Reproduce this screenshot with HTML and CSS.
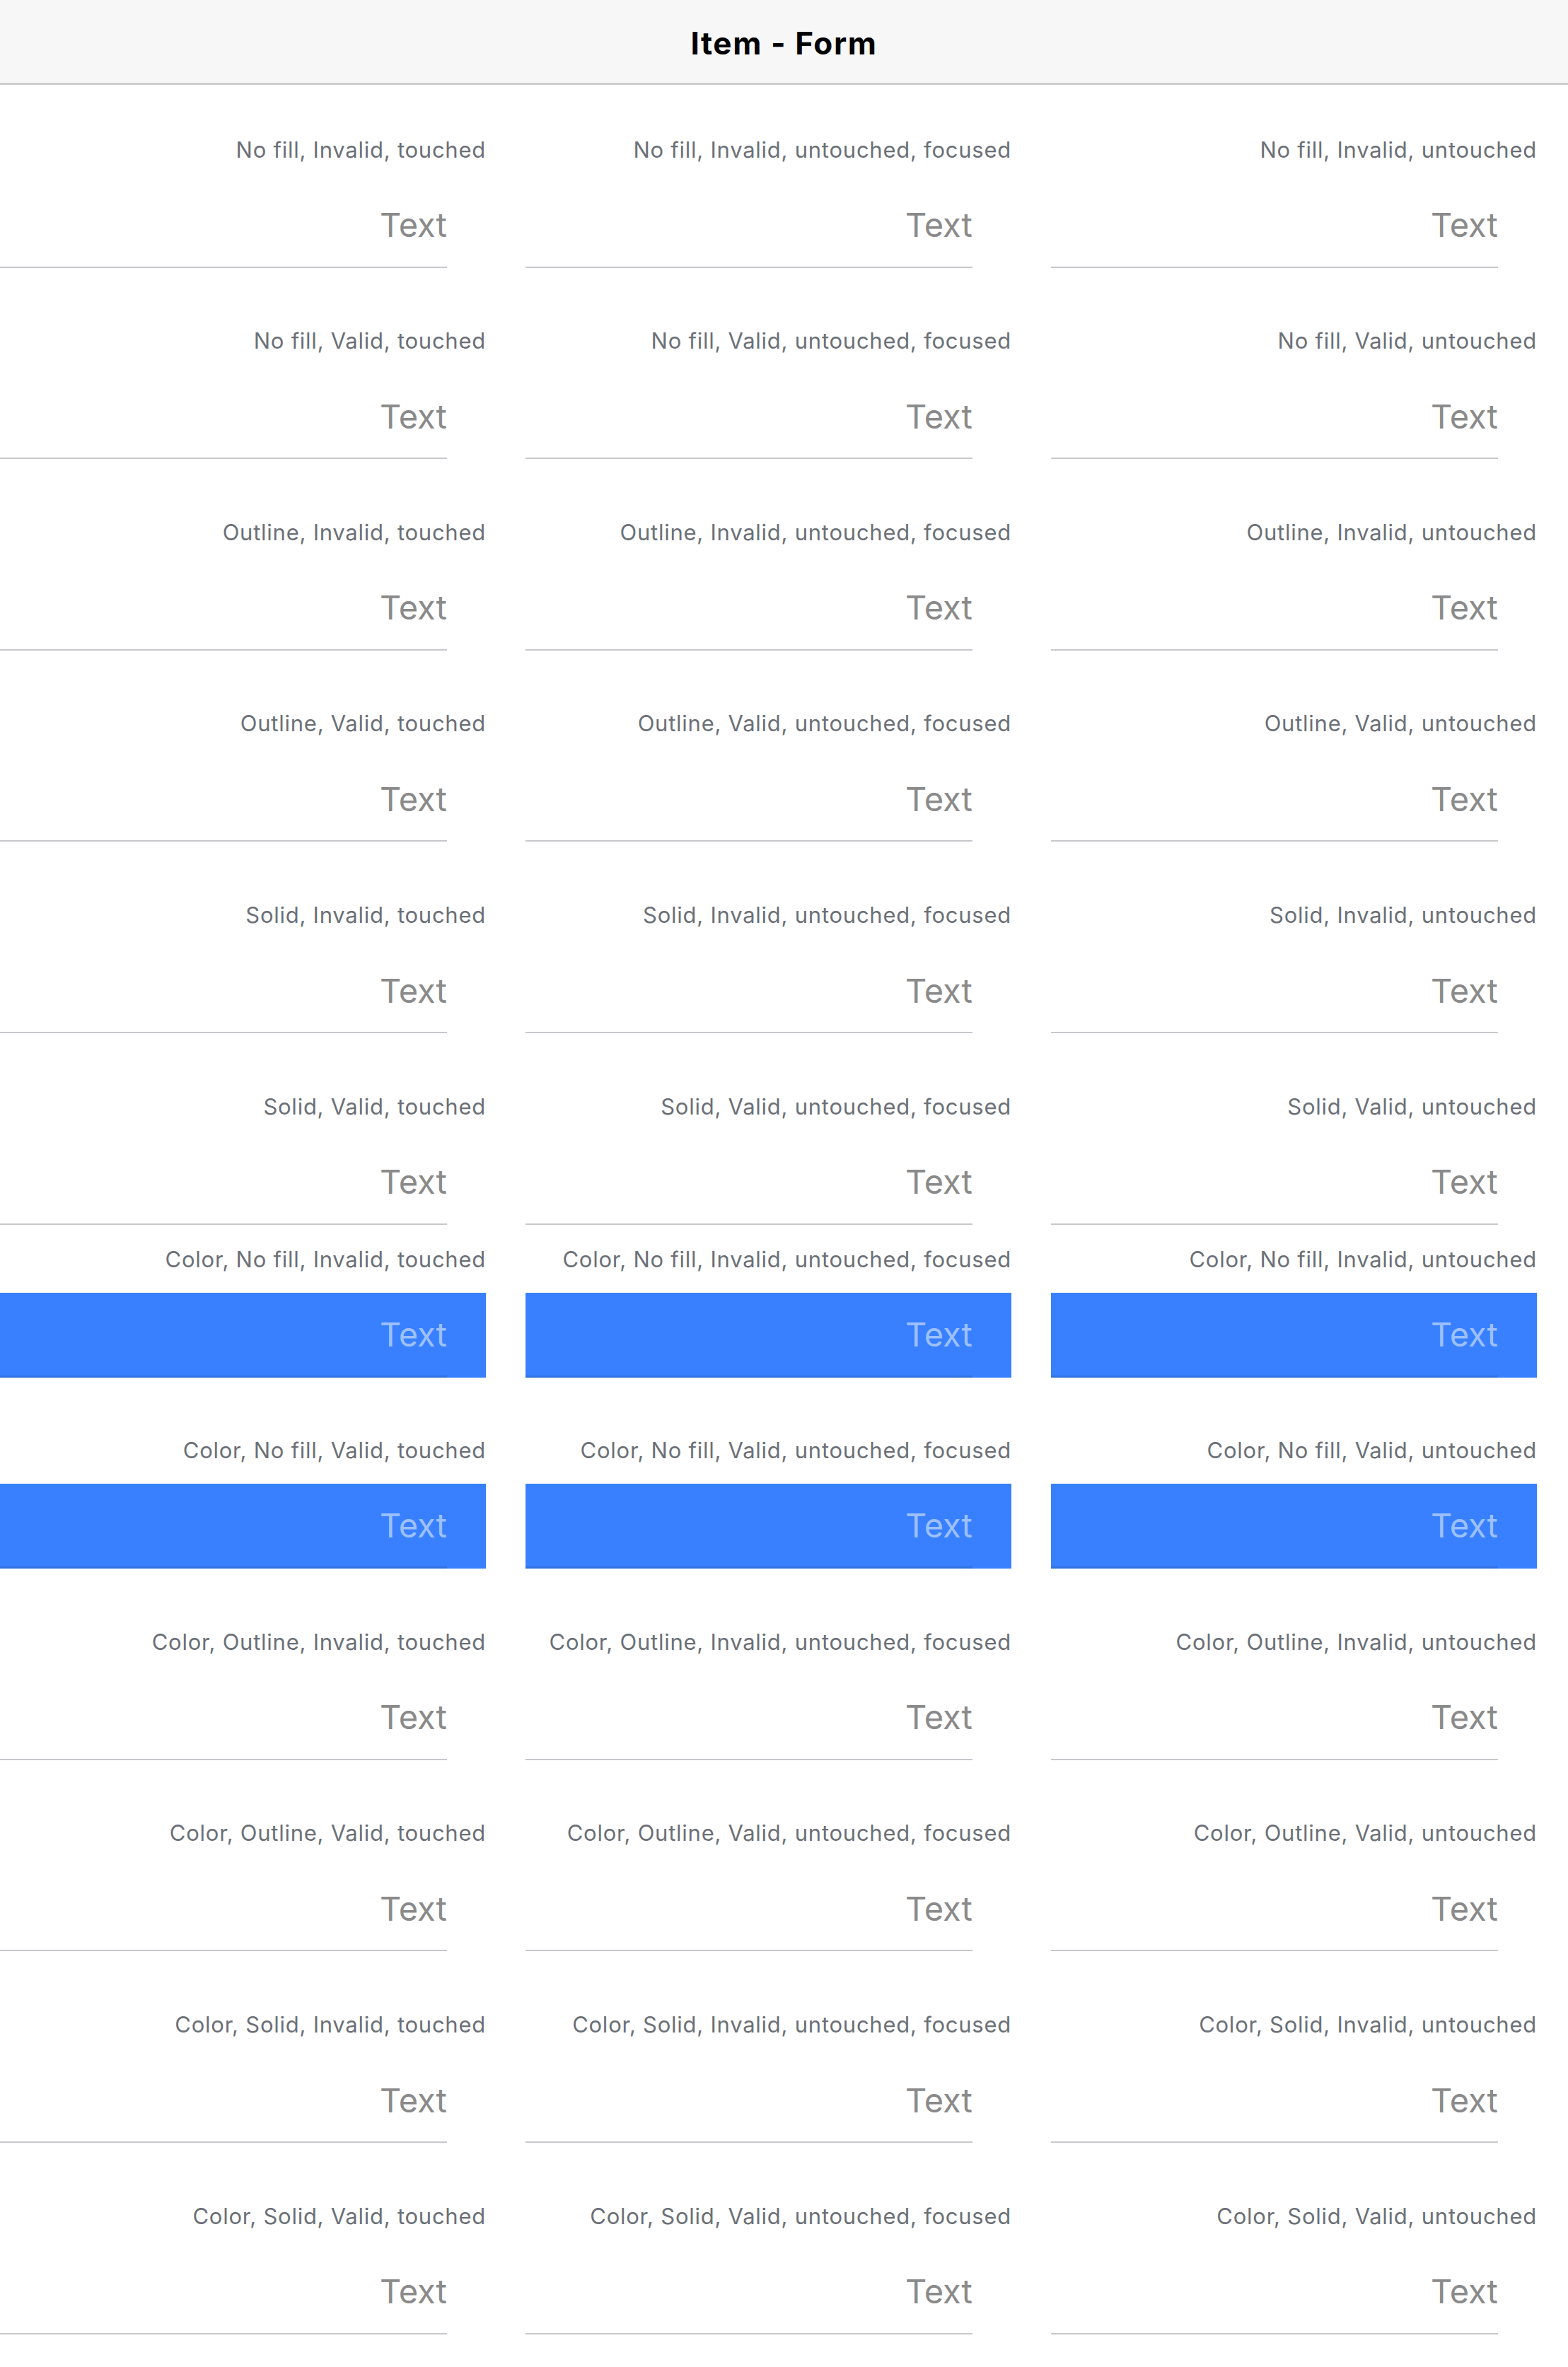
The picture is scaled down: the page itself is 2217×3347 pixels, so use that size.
FILE: index.html
```html
<!DOCTYPE html>
<html lang="en">
<head>
<meta charset="utf-8">
<title>Item - Form</title>
<link rel="stylesheet" href="styles.css">
</head>
<body>
<header class="toolbar"><h1 class="title">Item - Form</h1></header>
<main class="content">
  <section class="grid">
    <div class="item"><div class="label">No fill, Invalid, touched</div><div class="field"><div class="input">Text</div></div></div>
    <div class="item"><div class="label">No fill, Invalid, untouched, focused</div><div class="field"><div class="input">Text</div></div></div>
    <div class="item"><div class="label">No fill, Invalid, untouched</div><div class="field"><div class="input">Text</div></div></div>

    <div class="item"><div class="label">No fill, Valid, touched</div><div class="field"><div class="input">Text</div></div></div>
    <div class="item"><div class="label">No fill, Valid, untouched, focused</div><div class="field"><div class="input">Text</div></div></div>
    <div class="item"><div class="label">No fill, Valid, untouched</div><div class="field"><div class="input">Text</div></div></div>

    <div class="item"><div class="label">Outline, Invalid, touched</div><div class="field"><div class="input">Text</div></div></div>
    <div class="item"><div class="label">Outline, Invalid, untouched, focused</div><div class="field"><div class="input">Text</div></div></div>
    <div class="item"><div class="label">Outline, Invalid, untouched</div><div class="field"><div class="input">Text</div></div></div>

    <div class="item"><div class="label">Outline, Valid, touched</div><div class="field"><div class="input">Text</div></div></div>
    <div class="item"><div class="label">Outline, Valid, untouched, focused</div><div class="field"><div class="input">Text</div></div></div>
    <div class="item"><div class="label">Outline, Valid, untouched</div><div class="field"><div class="input">Text</div></div></div>

    <div class="item"><div class="label">Solid, Invalid, touched</div><div class="field"><div class="input">Text</div></div></div>
    <div class="item"><div class="label">Solid, Invalid, untouched, focused</div><div class="field"><div class="input">Text</div></div></div>
    <div class="item"><div class="label">Solid, Invalid, untouched</div><div class="field"><div class="input">Text</div></div></div>

    <div class="item"><div class="label">Solid, Valid, touched</div><div class="field"><div class="input">Text</div></div></div>
    <div class="item"><div class="label">Solid, Valid, untouched, focused</div><div class="field"><div class="input">Text</div></div></div>
    <div class="item"><div class="label">Solid, Valid, untouched</div><div class="field"><div class="input">Text</div></div></div>
  </section>

  <section class="grid grid-color">
    <div class="item item-color"><div class="label">Color, No fill, Invalid, touched</div><div class="field"><div class="input">Text</div></div></div>
    <div class="item item-color"><div class="label">Color, No fill, Invalid, untouched, focused</div><div class="field"><div class="input">Text</div></div></div>
    <div class="item item-color"><div class="label">Color, No fill, Invalid, untouched</div><div class="field"><div class="input">Text</div></div></div>

    <div class="item item-color"><div class="label">Color, No fill, Valid, touched</div><div class="field"><div class="input">Text</div></div></div>
    <div class="item item-color"><div class="label">Color, No fill, Valid, untouched, focused</div><div class="field"><div class="input">Text</div></div></div>
    <div class="item item-color"><div class="label">Color, No fill, Valid, untouched</div><div class="field"><div class="input">Text</div></div></div>

    <div class="item"><div class="label">Color, Outline, Invalid, touched</div><div class="field"><div class="input">Text</div></div></div>
    <div class="item"><div class="label">Color, Outline, Invalid, untouched, focused</div><div class="field"><div class="input">Text</div></div></div>
    <div class="item"><div class="label">Color, Outline, Invalid, untouched</div><div class="field"><div class="input">Text</div></div></div>

    <div class="item"><div class="label">Color, Outline, Valid, touched</div><div class="field"><div class="input">Text</div></div></div>
    <div class="item"><div class="label">Color, Outline, Valid, untouched, focused</div><div class="field"><div class="input">Text</div></div></div>
    <div class="item"><div class="label">Color, Outline, Valid, untouched</div><div class="field"><div class="input">Text</div></div></div>

    <div class="item"><div class="label">Color, Solid, Invalid, touched</div><div class="field"><div class="input">Text</div></div></div>
    <div class="item"><div class="label">Color, Solid, Invalid, untouched, focused</div><div class="field"><div class="input">Text</div></div></div>
    <div class="item"><div class="label">Color, Solid, Invalid, untouched</div><div class="field"><div class="input">Text</div></div></div>

    <div class="item"><div class="label">Color, Solid, Valid, touched</div><div class="field"><div class="input">Text</div></div></div>
    <div class="item"><div class="label">Color, Solid, Valid, untouched, focused</div><div class="field"><div class="input">Text</div></div></div>
    <div class="item"><div class="label">Color, Solid, Valid, untouched</div><div class="field"><div class="input">Text</div></div></div>
  </section>
</main>
</body>
</html>
```

FILE: styles.css
```css
* {
  box-sizing: border-box;
}

html, body {
  margin: 0;
  padding: 0;
  background: #ffffff;
}

body {
  font-family: Inter, "Noto Sans", "Liberation Sans", sans-serif;
  overflow: hidden;
}

.toolbar {
  height: 120px;
  background: #f7f7f7;
  border-bottom: 3px solid #cccccc;
  display: flex;
  align-items: center;
  justify-content: center;
  padding-top: 5px;
}

.title {
  margin: 0;
  font-size: 44px;
  font-weight: 700;
  letter-spacing: 1.6px;
  color: #000000;
  line-height: 1;
}

.content {
  padding-top: 72.7px;
}

.grid {
  display: grid;
  grid-template-columns: repeat(3, 687px);
  column-gap: 56px;
  row-gap: 84.6px;
}

.grid-color {
  margin-top: 30px;
}

.item {
  display: flex;
  flex-direction: column;
}

.label {
  font-size: 31px;
  line-height: 38px;
  height: 38px;
  margin-bottom: 28px;
  letter-spacing: 0.75px;
  color: #6b7077;
  text-align: right;
  white-space: nowrap;
}

.field {
  height: 120px;
  padding-right: 55px;
  display: flex;
}

.input {
  flex: 1;
  display: flex;
  align-items: center;
  justify-content: flex-end;
  border-bottom: 2px solid #c8c7cc;
  font-size: 47px;
  color: #8a8a8a;
}

.item-color .field {
  background: #3880ff;
}

.item-color .input {
  border-bottom: 3px solid #3171e0;
  color: #9dc0ff;
}
```
